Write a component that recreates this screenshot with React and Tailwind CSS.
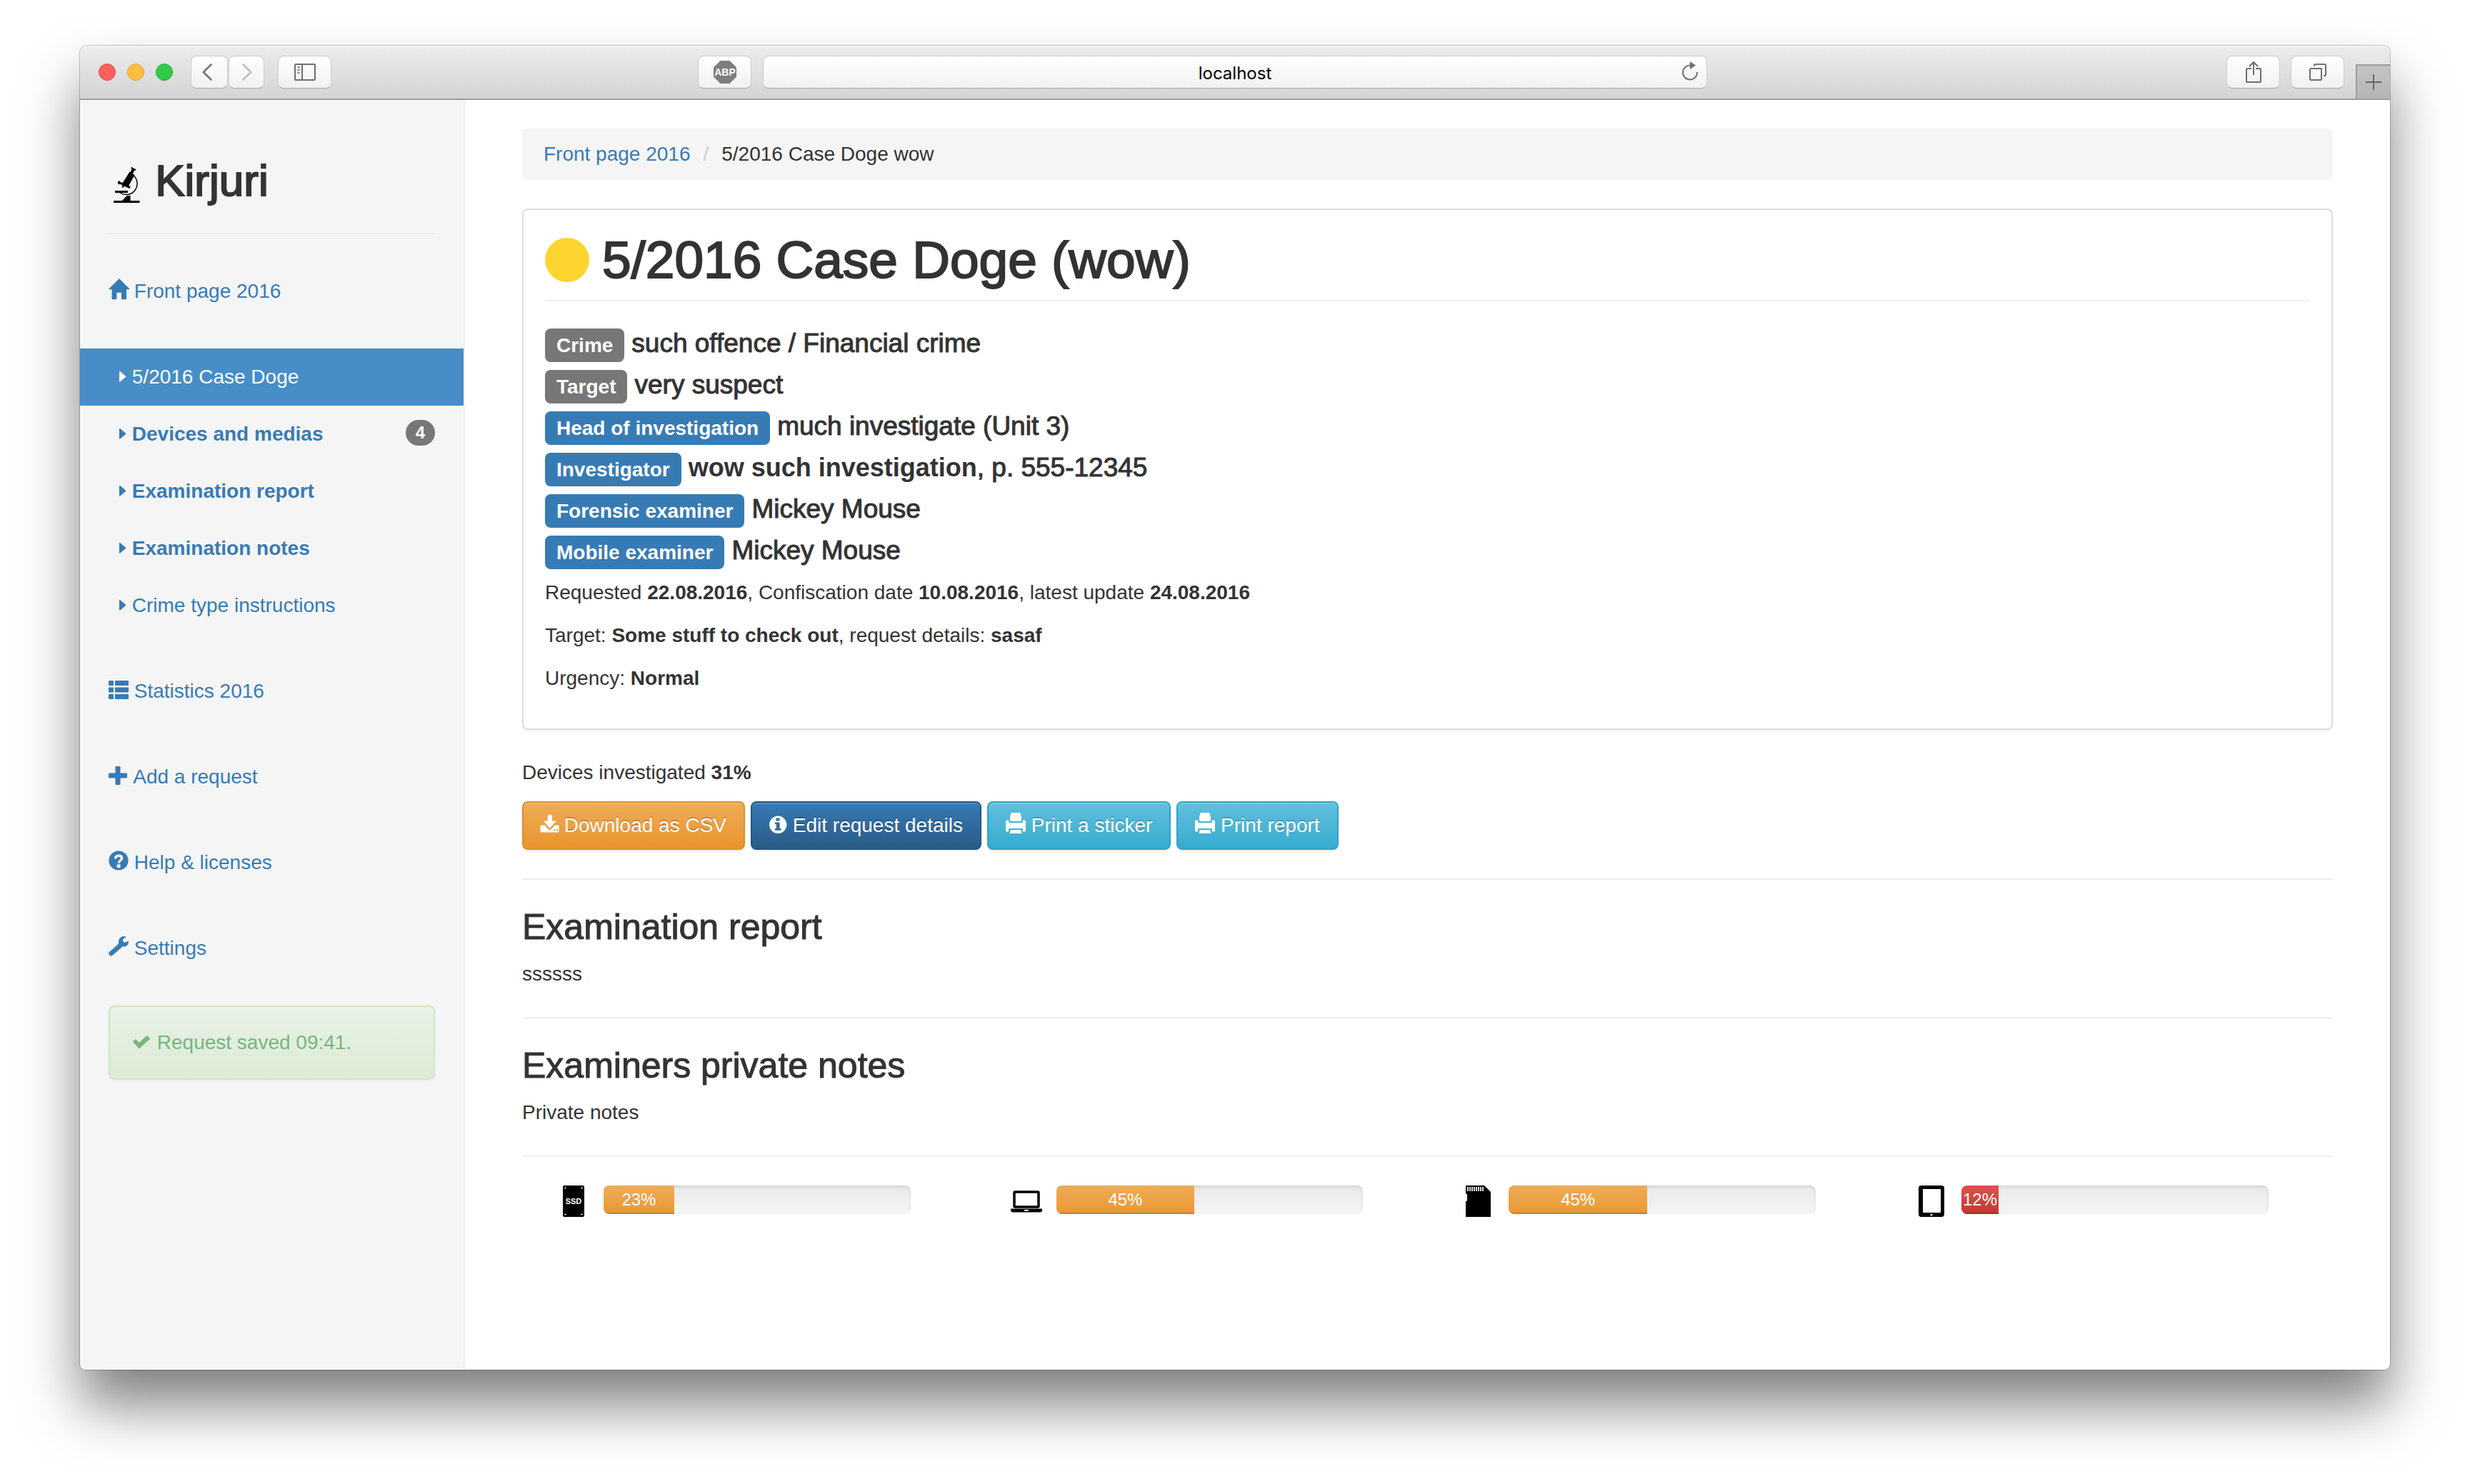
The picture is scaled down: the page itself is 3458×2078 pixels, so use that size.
import React from "react";

const sans = "font-['Liberation_Sans',Arial,sans-serif]";

/* ---------- Icons ---------- */

function Glyph({ width = 28, children }) {
  return (
    <svg
      width={width}
      height="28"
      viewBox={`0 0 ${width} 28`}
      className="inline-block overflow-visible align-[-2px]"
      fill="currentColor"
      aria-hidden="true"
    >
      {children}
    </svg>
  );
}

const HomeIcon = () => (
  <Glyph>
    <path d="M.4 13.6 14.5-.5q.4-.4.8 0L29.4 13.6q.3.6-.3.6H25v13.4q0 .6-.6.6h-5.8q-.6 0-.6-.6v-8.8h-6.6v8.8q0 .6-.6.6H5.200q-.6 0-.6-.6V14.200H.8q-.7 0-.4-.6Z" />
  </Glyph>
);

const ListIcon = () => (
  <Glyph>
    <rect x="0" y="2" width="7" height="7" rx="1" />
    <rect x="9" y="2" width="19" height="7" rx="1" />
    <rect x="0" y="11.500" width="7" height="7" rx="1" />
    <rect x="9" y="11.500" width="19" height="7" rx="1" />
    <rect x="0" y="21" width="7" height="7" rx="1" />
    <rect x="9" y="21" width="19" height="7" rx="1" />
  </Glyph>
);

const PlusIcon = () => (
  <Glyph>
    <rect x="0" y="11.500" width="26" height="7" rx="1" />
    <rect x="9.500" y="2" width="7" height="26" rx="1" />
  </Glyph>
);

const HelpIcon = () => (
  <Glyph>
    <circle cx="14" cy="14" r="13.600" />
    <path
      d="M9.600 11.600C9.600 8.500 11.500 7.300 14.200 7.300c2.900 0 4.400 1.400 4.400 3.500 0 3-4.300 3-4.300 6.900"
      fill="none"
      stroke="#f5f5f5"
      strokeWidth="3.400"
    />
    <rect x="11.700" y="19.300" width="4.800" height="4.800" fill="#f5f5f5" />
  </Glyph>
);

const WrenchIcon = () => (
  <Glyph>
    <path d="M14 10.500V8C14 5 15.400 2.400 17.800 1 19.900-.2 22.600-.2 24.700.8L20 4.300l.4 3.600 2.600.9 4.900-2.300c.3 2.200-.3 4.400-1.700 5.900-1.800 1.900-4.200 2.300-6.400 1.800L5.200 27c-.8.8-2 .9-2.800.2L.5 25.300c-.7-.8-.6-2 .2-2.700Z" />
  </Glyph>
);

const CheckIcon = () => (
  <Glyph>
    <path
      d="m3 15.700 2.500-2.600 5.400 4.700L21.700 8l3.300 3.300L11 24.400Z"
      stroke="currentColor"
      strokeWidth="1.600"
      strokeLinejoin="round"
    />
  </Glyph>
);

const DownloadIcon = () => (
  <Glyph width={25}>
    <path d="M9.800 3q0-1 1-1h4q1 0 1 1v7.500h5q.8 0 .3.700l-7.500 8.500q-.8.800-1.600 0L4.500 11.200q-.5-.7.3-.7h5Z" />
    <path
      fillRule="evenodd"
      d="M1 16.500h4.500l5.900 6.200q1.400 1.200 2.800 0l5.600-6.200H24q1.500 0 1.500 1.500v7q0 1.500-1.500 1.500H1Q-.5 26.500-.5 25v-7Q-.5 16.500 1 16.500ZM18.300 22v2.400h2V22Zm3.600 0v2.400h2V22Z"
    />
  </Glyph>
);

const InfoIcon = () => (
  <Glyph width={25}>
    <path
      fillRule="evenodd"
      d="M12.200 3.600a12.200 12.200 0 1 1 0 24.400 12.200 12.200 0 0 1 0-24.400ZM9.500 6.600v3.800h5V6.600ZM8 12.600V15h1.800v6.300H8v2.400h8.700v-2.400h-2.100v-8.700Z"
    />
  </Glyph>
);

const PrintIcon = () => (
  <Glyph>
    <path d="M8.500-1h11q.7 0 .9.700L22 5v4.300q0 1.700-1.700 1.700H7.700Q6 11 6 9.300V5L7.600-.3Q7.800-1 8.500-1Z" />
    <path d="M0 11q0-1.500 1.500-1.500H4v2Q4 13.300 6 13.300h16q2 0 2-1.800v-2h2.500Q28 9.500 28 11v13q0 1.500-1.500 1.500H24V22q0-1-1-1H5q-1 0-1 1v3.500H1.500Q0 25.500 0 24Z" />
    <path d="M6.700 23.200h14.600l1.200 4.800h-17Z" />
  </Glyph>
);

const CaretIcon = () => (
  <svg width="25" height="28" viewBox="0 0 25 28" className="inline-block overflow-visible align-baseline" fill="currentColor" aria-hidden="true">
    <path d="M15 11.500q0-1.200 1-.5l8 6.700q.6.600 0 1.200l-8 6.700q-1 .7-1-.5Z" />
  </svg>
);

const MicroscopeIcon = () => (
  <svg width="48" height="50" viewBox="0 0 48 50" className="inline-block align-[-10px]" aria-hidden="true">
    <g fill="#000">
      <rect x="7" y="47" width="36.500" height="3" />
      <path d="M19 47l6-6.500 5.500-.8V47Z" />
      <rect x="9" y="33" width="18" height="3" />
      <path d="M29.500 6.600 36.500 11 27 28.500 18.500 24Z" />
    </g>
    <g fill="none" stroke="#000">
      <path d="M34 11A15.300 15.300 0 1 1 15.500 35.500" strokeWidth="1.500" />
      <path d="M31.500.8l6.600 3.300" strokeWidth="2" />
      <path d="M35 2.500 31.500 9.500" strokeWidth="4" />
      <path d="M13.500 21 30 28.700" strokeWidth="3" />
      <path d="M15 19.500l-1 4.500M21.500 24l-2 4.500" strokeWidth="2.500" />
    </g>
  </svg>
);

const SsdIcon = () => (
  <svg width="48" height="44" viewBox="0 0 48 44" aria-hidden="true">
    <rect x="9" y="0" width="30" height="44" rx="2" />
    <g fill="#fff">
      <circle cx="12.500" cy="3.500" r="1.100" />
      <circle cx="35.500" cy="3.500" r="1.100" />
      <circle cx="12.500" cy="40.500" r="1.100" />
      <circle cx="35.500" cy="40.500" r="1.100" />
    </g>
    <text x="24" y="26" textAnchor="middle" fill="#fff" className="font-['Liberation_Sans',Arial,sans-serif] text-[11px] font-bold">
      SSD
    </text>
  </svg>
);

const LaptopIcon = () => (
  <svg width="48" height="44" viewBox="0 0 48 44" aria-hidden="true">
    <rect x="7" y="9" width="34" height="21" rx="1" fill="#fff" stroke="#000" strokeWidth="3.500" />
    <path fillRule="evenodd" d="M2 32.500h44v2q0 3-3 3H5q-3 0-3-3Zm19 1.500v1.800h6V34Z" />
  </svg>
);

const SdCardIcon = () => (
  <svg width="48" height="44" viewBox="0 0 48 44" aria-hidden="true">
    <path d="M6 0h26l9 9v35H6V22h2V12H6Z" />
    <path d="M9 2v6M12 2v6M15 2v6M18 2v6M21 2v6M24 2v6M27 2v6M30 2v6" stroke="#fff" strokeWidth="1.700" />
  </svg>
);

const TabletIcon = () => (
  <svg width="48" height="44" viewBox="0 0 48 44" aria-hidden="true">
    <rect x="6" y="0" width="36" height="44" rx="4" />
    <rect x="12" y="5" width="25" height="33" fill="#fff" />
    <circle cx="24" cy="41" r="1.500" fill="#fff" />
  </svg>
);

/* ---------- Browser chrome ---------- */

function ChromeButton({ label, className, children }) {
  return (
    <button
      type="button"
      aria-label={label}
      className={`flex h-[46px] shrink-0 items-center justify-center rounded-lg border border-[#cdcdcf] border-b-[#a9a9ab] bg-linear-to-b from-white to-[#f1f1f1] ${className}`}
    >
      {children}
    </button>
  );
}

function Toolbar() {
  return (
    <div className="grid h-[76px] grid-cols-[1fr_minmax(0,1322px)_1fr] items-center rounded-t-[10px] border-b-2 border-[#9f9fa2] bg-linear-to-b from-[#ededee] to-[#d3d3d5] shadow-[inset_0_2px_0_#f6f6f6]">
      <div className="flex items-center pr-4 pl-[26px]">
        <div className="flex gap-4">
          <button type="button" aria-label="Close" className="size-6 rounded-full border border-[#e4453f] bg-[#ff605c]" />
          <button type="button" aria-label="Minimize" className="size-6 rounded-full border border-[#dfa033] bg-[#ffbe40]" />
          <button type="button" aria-label="Zoom" className="size-6 rounded-full border border-[#1fab36] bg-[#34ca49]" />
        </div>
        <ChromeButton label="Back" className="ml-[25px] w-[52px]">
          <svg width="14" height="24" viewBox="0 0 14 24" fill="none" stroke="#747474" strokeWidth="2.600" strokeLinecap="round" className="mr-[6px]">
            <path d="M12.500 1.500 1.800 12l10.700 10.500" />
          </svg>
        </ChromeButton>
        <ChromeButton label="Forward" className="ml-px w-[50px]">
          <svg width="14" height="24" viewBox="0 0 14 24" fill="none" stroke="#bdbdbd" strokeWidth="2.600" strokeLinecap="round" className="ml-px">
            <path d="M1.500 1.500 12.200 12 1.500 22.500" />
          </svg>
        </ChromeButton>
        <ChromeButton label="Show sidebar" className="ml-[19px] w-[75px]">
          <svg width="30" height="24" viewBox="0 0 30 24" fill="none" stroke="#6f6f6f" strokeWidth="2">
            <rect x="1" y="1" width="28" height="22" rx="1" />
            <path d="M11 1v22" />
            <path d="M4 5h4M4 9h4M4 13h4" stroke="#9a9a9a" />
          </svg>
        </ChromeButton>
        <ChromeButton label="Adblock Plus" className="ml-auto w-[75px]">
          <svg width="32" height="32" viewBox="0 0 32 32">
            <path d="M9.500 0h13L32 9.500v13L22.500 32h-13L0 22.500v-13Z" fill="#7d7d7d" />
            <text x="16" y="21" textAnchor="middle" fill="#fff" className="font-['Liberation_Sans',Arial,sans-serif] text-[14px] font-bold">
              ABP
            </text>
          </svg>
        </ChromeButton>
      </div>

      <div className="relative">
        <input
          type="text"
          aria-label="Address"
          defaultValue="localhost"
          className="block h-[46px] w-full rounded-lg border border-[#cdcdcf] border-b-[#a9a9ab] bg-linear-to-b from-white to-[#f1f1f1] pt-[2px] text-center font-['Inter',sans-serif] text-[24px] text-black"
        />
        <button type="button" aria-label="Reload" className="absolute top-2 right-3">
          <svg width="24" height="28" viewBox="0 0 24 28" fill="none" stroke="#6f6f6f" strokeWidth="2">
            <path d="M12.500 5.500A10 10 0 1 0 22 15" />
            <path d="M12 0v11l8-5.500Z" fill="#6f6f6f" stroke="none" />
          </svg>
        </button>
      </div>

      <div className="flex items-center justify-end self-stretch">
        <ChromeButton label="Share" className="w-[75px]">
          <svg width="24" height="32" viewBox="0 0 24 32" fill="none" stroke="#6f6f6f" strokeWidth="2">
            <path d="M9 11H3q-1 0-1 1v17q0 1 1 1h18q1 0 1-1V12q0-1-1-1h-6" />
            <path d="M12 2v18M6 8l6-6 6 6" />
          </svg>
        </ChromeButton>
        <ChromeButton label="Show all tabs" className="ml-[15px] w-[75px]">
          <svg width="24" height="24" viewBox="0 0 24 24" fill="none" stroke="#6f6f6f" strokeWidth="2">
            <rect x="1" y="7" width="16" height="16" rx="1" />
            <path d="M7 4V2q0-1 1-1h14q1 0 1 1v14q0 1-1 1h-2" />
          </svg>
        </ChromeButton>
        <button
          type="button"
          aria-label="New tab"
          className="ml-4 flex h-12 w-12 items-center justify-center self-end border-t-2 border-l-2 border-[#9d9d9f] bg-linear-to-b from-[#c3c3c4] to-[#b5b5b7]"
        >
          <svg width="22" height="22" viewBox="0 0 22 22" stroke="#666" strokeWidth="2">
            <path d="M11 0v22M0 11h22" />
          </svg>
        </button>
      </div>
    </div>
  );
}

/* ---------- Sidebar ---------- */

const caseLinks = [
  { label: "5/2016 Case Doge", active: true },
  { label: "Devices and medias", bold: true, badge: 4 },
  { label: "Examination report", bold: true },
  { label: "Examination notes", bold: true },
  { label: "Crime type instructions" },
];

const toolLinks = [
  { label: "Statistics 2016", Icon: ListIcon },
  { label: "Add a request", Icon: PlusIcon },
  { label: "Help & licenses", Icon: HelpIcon },
  { label: "Settings", Icon: WrenchIcon },
];

function CaseLink({ label, active, bold, badge }) {
  return (
    <li>
      <a
        href="#"
        className={`flex items-start justify-between px-10 py-5 ${active ? "bg-[#478dc8] text-white" : "text-[#377bb5]"} ${bold ? "font-bold" : ""}`}
      >
        <span>
          <CaretIcon /> {label}
        </span>
        {badge && (
          <span className="rounded-[20px] bg-[#777] px-[14px] py-[6px] text-[24px] leading-[24px] font-bold text-white">{badge}</span>
        )}
      </a>
    </li>
  );
}

function SideLink({ label, Icon }) {
  return (
    <li>
      <a href="#" className="block px-10 py-5 text-[#377bb5]">
        <Icon /> {label}
      </a>
    </li>
  );
}

function Sidebar() {
  return (
    <aside className="w-1/6 shrink-0 rounded-bl-[8px] border-r-2 border-[#eee] bg-[#f5f5f5]">
      <h2 className="px-10 pt-20 text-[62px] leading-[66px] whitespace-nowrap [-webkit-text-stroke:2px_#333]">
        <MicroscopeIcon /> Kirjuri
      </h2>
      <hr className="mx-10 my-10 border-t-2 border-[#eee]" />
      <nav className="flex flex-col gap-10 whitespace-nowrap">
        <ul>
          <SideLink label="Front page 2016" Icon={HomeIcon} />
        </ul>
        <ul>
          {caseLinks.map((link) => (
            <CaseLink key={link.label} {...link} />
          ))}
        </ul>
        <ul className="flex flex-col gap-10">
          {toolLinks.map((link) => (
            <SideLink key={link.label} {...link} />
          ))}
        </ul>
      </nav>
      <div
        role="status"
        className="mx-10 mt-10 rounded-lg border-2 border-[#cfe6c5] bg-linear-to-b from-[#e8f1e7] to-[#dcebd5] p-[30px] whitespace-nowrap text-[#78b77c] shadow-[0_2px_4px_rgba(0,0,0,0.04)]"
      >
        <CheckIcon /> Request saved 09:41.
      </div>
    </aside>
  );
}

/* ---------- Main content ---------- */

const people = [
  { tag: "Crime", gray: true, value: "such offence / Financial crime" },
  { tag: "Target", gray: true, value: "very suspect" },
  { tag: "Head of investigation", value: "much investigate (Unit 3)" },
  {
    tag: "Investigator",
    value: (
      <>
        <strong className="text-[36px] font-bold [-webkit-text-stroke:0]">wow such investigation</strong>, p. 555-12345
      </>
    ),
  },
  { tag: "Forensic examiner", value: "Mickey Mouse" },
  { tag: "Mobile examiner", value: "Mickey Mouse" },
];

const actions = [
  { label: "Download as CSV", Icon: DownloadIcon, tone: "border-[#e08e2a] from-[#eeac57] to-[#ea942b]" },
  { label: "Edit request details", Icon: InfoIcon, tone: "border-[#27567f] from-[#377bb5] to-[#2a5b87]" },
  { label: "Print a sticker", Icon: PrintIcon, tone: "border-[#30a4c7] from-[#61c0dd] to-[#34abd0]" },
  { label: "Print report", Icon: PrintIcon, tone: "border-[#30a4c7] from-[#61c0dd] to-[#34abd0]" },
];

const devices = [
  { name: "SSD drives", Icon: SsdIcon, percent: 23, tone: "from-[#eeac57] to-[#ea9730]" },
  { name: "Computers", Icon: LaptopIcon, percent: 45, tone: "from-[#eeac57] to-[#ea9730]" },
  { name: "Memory cards", Icon: SdCardIcon, percent: 45, tone: "from-[#eeac57] to-[#ea9730]" },
  { name: "Mobile devices", Icon: TabletIcon, percent: 12, tone: "from-[#d85452] to-[#c73431]" },
];

function Divider() {
  return <hr className="my-10 border-t-2 border-[#eee]" />;
}

function Section({ title, children }) {
  return (
    <section>
      <h3 className="mb-5 text-[50px] leading-[52px] [-webkit-text-stroke:1px_#333]">{title}</h3>
      <p>{children}</p>
    </section>
  );
}

function DeviceProgress({ name, Icon, percent, tone }) {
  return (
    <div className="flex items-start gap-[18px] pr-[90px] pl-12">
      <Icon />
      <div
        role="progressbar"
        aria-label={name}
        aria-valuenow={percent}
        aria-valuemin={0}
        aria-valuemax={100}
        className="h-10 flex-1 overflow-hidden rounded-lg bg-linear-to-b from-[#e9e9e9] to-[#f5f5f5] shadow-[inset_0_2px_4px_rgba(0,0,0,0.1)]"
      >
        <div
          className={`h-full bg-linear-to-b text-center text-[24px] leading-[40px] text-white shadow-[inset_0_-2px_0_rgba(0,0,0,0.15)] ${tone}`}
          style={{ width: `${percent}%` }}
        >
          {percent}%
        </div>
      </div>
    </div>
  );
}

function Main() {
  return (
    <main className="min-w-0 flex-1 px-20 pt-10 pb-20">
      <nav aria-label="Breadcrumb" className="mb-10 rounded-lg bg-[#f5f5f5] px-[30px] py-4">
        <ol className="flex">
          <li>
            <a href="#" className="text-[#377bb5]">
              Front page 2016
            </a>
          </li>
          <li aria-hidden="true" className="px-[18px] text-[#ccc]">
            /
          </li>
          <li aria-current="page">5/2016 Case Doge wow</li>
        </ol>
      </nav>

      <article className="mb-10 rounded-lg border-2 border-[#ddd] px-[30px] pt-[30px] pb-[50px] shadow-[0_2px_2px_rgba(0,0,0,0.05)]">
        <header className="mb-[30px] flex items-center gap-[18px] border-b-2 border-[#eee] pb-4">
          <span className="size-[62px] rounded-full bg-[#fed530]" />
          <h1 className="text-[73px] leading-[80px] [-webkit-text-stroke:2px_#333]">5/2016 Case Doge (wow)</h1>
        </header>
        <dl className="mb-[10px]">
          {people.map(({ tag, gray, value }) => (
            <div key={tag} className="flex h-[58px] items-baseline gap-[10px]">
              <dt
                className={`rounded-lg px-4 py-[10px] text-[28px] leading-[27px] font-bold text-white ${gray ? "bg-[#777]" : "bg-[#377bb5]"}`}
              >
                {tag}
              </dt>
              <dd className="text-[37px] leading-[58px] [-webkit-text-stroke:1px_#333]">{value}</dd>
            </div>
          ))}
        </dl>
        <div className="flex flex-col gap-5">
          <p>
            Requested <strong>22.08.2016</strong>, Confiscation date <strong>10.08.2016</strong>, latest update{" "}
            <strong>24.08.2016</strong>
          </p>
          <p>
            Target: <strong>Some stuff to check out</strong>, request details: <strong>sasaf</strong>
          </p>
          <p>
            Urgency: <strong>Normal</strong>
          </p>
        </div>
      </article>

      <p className="mb-5">
        Devices investigated <strong>31%</strong>
      </p>
      <div className="flex flex-wrap gap-2">
        {actions.map(({ label, Icon, tone }) => (
          <button
            key={label}
            type="button"
            className={`rounded-lg border-2 bg-linear-to-b px-6 py-3 text-white shadow-[inset_0_2px_0_rgba(255,255,255,0.15),0_2px_2px_rgba(0,0,0,0.075)] [text-shadow:0_-2px_0_rgba(0,0,0,0.2)] ${tone}`}
          >
            <Icon /> {label}
          </button>
        ))}
      </div>

      <Divider />
      <Section title="Examination report">ssssss</Section>
      <Divider />
      <Section title="Examiners private notes">Private notes</Section>
      <Divider />

      <div className="grid grid-cols-4">
        {devices.map((device) => (
          <DeviceProgress key={device.name} {...device} />
        ))}
      </div>
    </main>
  );
}

export default function App() {
  return (
    <div className={`flex min-h-screen flex-col bg-white px-28 pt-16 pb-40 text-[28px] leading-[40px] text-[#333] ${sans}`}>
      <div className="flex flex-1 flex-col rounded-t-[10px] rounded-b-[8px] bg-white shadow-[0_0_0_1px_rgba(0,0,0,0.22),0_50px_80px_rgba(0,0,0,0.5)]">
        <Toolbar />
        <div className="flex flex-1">
          <Sidebar />
          <Main />
        </div>
      </div>
    </div>
  );
}
